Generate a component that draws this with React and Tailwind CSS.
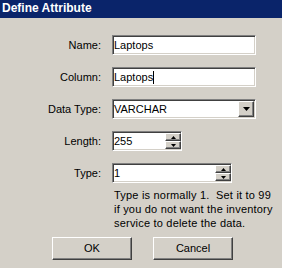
import React from 'react';

// Classic sunken field border
const sunken =
  'border border-t-[#808080] border-l-[#808080] border-b-white border-r-white shadow-[inset_1px_1px_0_#404040,inset_-1px_-1px_0_#d4d0c8]';
// Classic raised button border
const raised =
  'border border-t-white border-l-white border-b-[#404040] border-r-[#404040] shadow-[inset_-1px_-1px_0_#808080]';

const Label = ({ children }) => (
  <div className="h-[20px] flex items-center justify-end text-black">{children}</div>
);

const TextBox = ({ value, width, caret, children }) => (
  <div className={`${sunken} ${width} h-[20px] bg-white flex items-center pl-[1px]`}>
    <span className="flex-1 flex items-center">
      {value}
      {caret && <span className="w-[1px] h-[13px] bg-black" />}
    </span>
    {children}
  </div>
);

const Spinner = () => (
  <div className="flex flex-col h-[16px] w-[16px]">
    <div className={`${raised} flex-1 bg-[#d4d0c8] flex items-center justify-center`}>
      <svg width="5" height="3" viewBox="0 0 5 3">
        <path d="M2.5 0 L5 3 L0 3 Z" fill="#000" />
      </svg>
    </div>
    <div className={`${raised} flex-1 bg-[#d4d0c8] flex items-center justify-center`}>
      <svg width="5" height="3" viewBox="0 0 5 3">
        <path d="M0 0 L5 0 L2.5 3 Z" fill="#000" />
      </svg>
    </div>
  </div>
);

const App = () => {
  return (
    <div className="w-[282px] h-[268px] bg-[#d4d0c8] font-['Liberation_Sans',Arial,sans-serif] text-[11px] leading-none overflow-hidden">
      {/* Title bar */}
      <div className="h-[18px] bg-[#0a246a] text-white font-bold text-[12px] pl-[2px] leading-[17px]">
        Define Attribute
      </div>

      {/* Fields */}
      <div className="pt-[17px] grid grid-cols-[101px_auto] gap-x-[11px] gap-y-[12px] items-center">
        <Label>Name:</Label>
        <TextBox value="Laptops" width="w-[144px]" />

        <Label>Column:</Label>
        <TextBox value="Laptops" width="w-[144px]" caret />

        <Label>Data Type:</Label>
        <div className={`${sunken} w-[144px] h-[20px] bg-white flex items-center pl-[1px] pr-[1px]`}>
          <span className="flex-1">VARCHAR</span>
          <div className={`${raised} w-[16px] h-[16px] bg-[#d4d0c8] flex items-center justify-center`}>
            <svg width="7" height="4" viewBox="0 0 7 4">
              <path d="M0 0 L7 0 L3.5 4 Z" fill="#000" />
            </svg>
          </div>
        </div>

        <Label>Length:</Label>
        <TextBox value="255" width="w-[70px]">
          <Spinner />
        </TextBox>

        <Label>Type:</Label>
        <TextBox value="1" width="w-[120px]">
          <Spinner />
        </TextBox>
      </div>

      {/* Help text */}
      <div className="pl-[114px] mt-[5px] leading-[14px] tracking-[0.2px] text-black whitespace-pre">
        {'Type is normally 1.  Set it to 99'}
        <br />
        {'if you do not want the inventory'}
        <br />
        {'service to delete the data.'}
      </div>

      {/* Buttons */}
      <div className="flex gap-[21px] pl-[52px] mt-[7px]">
        <button className={`${raised} w-[80px] h-[23px] bg-[#d4d0c8] text-black`}>OK</button>
        <button className={`${raised} w-[80px] h-[23px] bg-[#d4d0c8] text-black`}>Cancel</button>
      </div>
    </div>
  );
};

export default App;
